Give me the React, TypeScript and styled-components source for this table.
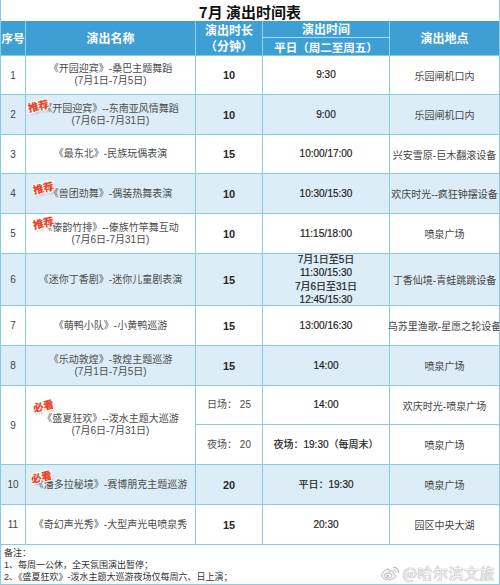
import React from "react";
import styled, { createGlobalStyle } from "styled-components";

const LINE = "#86cbe3";
const HEAD_BG = "#3d9fd3";
const ALT_BG = "#dcedf7";
const BODY_FONT = `"Liberation Sans", "Noto Sans CJK SC", sans-serif`;

const GlobalStyle = createGlobalStyle`
  html, body { margin: 0; padding: 0; background: #fff; }
  body { font-family: "Noto Sans CJK SC", "Noto Sans", sans-serif; }
  * { box-sizing: border-box; }
`;

const Page = styled.div`
  width: 500px;
  height: 585px;
  border-left: 1px solid ${LINE};
  border-right: 1px solid ${LINE};
  border-bottom: 1px solid ${LINE};
  display: flex;
  flex-direction: column;
  overflow: hidden;
  background: #fff;
`;

const Grid = styled.div`
  display: grid;
  grid-template-columns: 25px 170px 67px 127px 109px;
  grid-template-rows: 21px 17px 18px 39px 40px 39px 40px 40px 52px 40px 40px 39px 40px 40px 40px;
`;

const Title = styled.div`
  grid-column: 1 / -1;
  display: flex;
  align-items: center;
  justify-content: center;
  font-size: 15px;
  font-weight: 700;
  color: #111;
  line-height: 1;
  padding-top: 1px;
`;

const HeadCell = styled.div<{ $span?: number; $last?: boolean; $top?: boolean; $size?: number }>`
  grid-row: span ${(p) => p.$span ?? 1};
  background: ${HEAD_BG};
  color: #fff;
  font-weight: 700;
  font-size: ${(p) => p.$size ?? 12}px;
  line-height: 16px;
  display: flex;
  flex-direction: column;
  align-items: center;
  justify-content: center;
  white-space: nowrap;
  border-right: ${(p) => (p.$last ? "none" : "1px solid #8fd2ee")};
  border-bottom: 1px solid ${(p) => (p.$top ? "#a9def3" : LINE)};
`;

const Cell = styled.div<{ $alt?: boolean; $span?: number; $last?: boolean }>`
  grid-row: span ${(p) => p.$span ?? 1};
  position: relative;
  background: ${(p) => (p.$alt ? ALT_BG : "#fff")};
  border-right: ${(p) => (p.$last ? "none" : `1px solid ${LINE}`)};
  border-bottom: 1px solid ${LINE};
  display: flex;
  flex-direction: column;
  align-items: center;
  justify-content: center;
  text-align: center;
  white-space: nowrap;
  font-family: ${BODY_FONT};
`;

const NumText = styled.span`
  font-size: 10px;
  color: #444;
`;

const NameText = styled.span`
  font-size: 10px;
  line-height: 12px;
  color: #4d4d4d;
`;

const DurText = styled.span`
  font-size: 11px;
  font-weight: 700;
  color: #2a2a2a;
`;

const TimeText = styled.span`
  font-size: 10px;
  line-height: 13.3px;
  color: #1f1f1f;
  -webkit-text-stroke: 0.2px #1f1f1f;
`;

const PlaceText = styled.span`
  font-size: 10px;
  color: #444;
`;

const Badge = styled.span<{ $left: number; $top: number }>`
  position: absolute;
  left: ${(p) => p.$left}px;
  top: ${(p) => p.$top}px;
  font-family: "Noto Sans CJK SC", sans-serif;
  font-size: 10.5px;
  font-weight: 900;
  line-height: 1;
  color: #e8452a;
  transform: rotate(-13deg);
  text-shadow: 1px 1px 0 #fff, -1px -1px 0 #fff, 1px -1px 0 #fff, -1px 1px 0 #fff,
    1px 2px 2px rgba(0, 0, 0, 0.25);
  z-index: 2;
`;

const Footer = styled.div`
  flex: 1;
  display: flex;
  justify-content: space-between;
  align-items: flex-end;
  padding: 2px 4px 5px 3px;
`;

const Notes = styled.div`
  align-self: flex-start;
  display: flex;
  flex-direction: column;
  font-family: ${BODY_FONT};
  font-size: 9px;
  line-height: 12px;
  color: #333;
`;

const Watermark = styled.div`
  display: flex;
  align-items: center;
  gap: 3px;
  font-size: 15px;
  color: #f4f4f4;
  text-shadow: 0 0 1px #a0a0a0, 0 0 1px #a0a0a0;
  letter-spacing: 0.5px;
`;

type Row = {
  no: string;
  alt?: boolean;
  badge?: { text: string; left: number; top: number };
  name: string[];
  dur: string;
  time: string[];
  place: string;
};

const rows: Row[] = [
  { no: "1", name: ["《开园迎宾》-桑巴主题舞蹈", "(7月1日-7月5日)"], dur: "10", time: ["9:30"], place: "乐园闸机口内" },
  {
    no: "2",
    alt: true,
    badge: { text: "推荐", left: 2, top: 6 },
    name: ["《开园迎宾》--东南亚风情舞蹈", "(7月6日-7月31日)"],
    dur: "10",
    time: ["9:00"],
    place: "乐园闸机口内",
  },
  { no: "3", name: ["《最东北》-民族玩偶表演"], dur: "15", time: ["10:00/17:00"], place: "兴安雪原-巨木翻滚设备" },
  {
    no: "4",
    alt: true,
    badge: { text: "推荐", left: 7, top: 9 },
    name: ["《兽团劲舞》-偶装热舞表演"],
    dur: "10",
    time: ["10:30/15:30"],
    place: "欢庆时光--疯狂钟摆设备",
  },
  {
    no: "5",
    badge: { text: "推荐", left: 7, top: 4 },
    name: ["《傣韵竹排》--傣族竹竿舞互动", "(7月6日-7月31日)"],
    dur: "10",
    time: ["11:15/18:00"],
    place: "喷泉广场",
  },
  {
    no: "6",
    alt: true,
    name: ["《迷你丁香剧》-迷你儿童剧表演"],
    dur: "15",
    time: ["7月1日至5日", "11:30/15:30", "7月6日至31日", "12:45/15:30"],
    place: "丁香仙境-青蛙跳跳设备",
  },
  { no: "7", name: ["《萌鸭小队》-小黄鸭巡游"], dur: "15", time: ["13:00/16:30"], place: "乌苏里渔歌-星愿之轮设备" },
  { no: "8", alt: true, name: ["《乐动敦煌》-敦煌主题巡游", "(7月1日-7月5日)"], dur: "15", time: ["14:00"], place: "喷泉广场" },
];

const tailRows: Row[] = [
  {
    no: "10",
    alt: true,
    badge: { text: "必看", left: 5, top: 7 },
    name: ["《潘多拉秘境》-赛博朋克主题巡游"],
    dur: "20",
    time: ["平日：19:30"],
    place: "喷泉广场",
  },
  { no: "11", name: ["《奇幻声光秀》-大型声光电喷泉秀"], dur: "15", time: ["20:30"], place: "园区中央大湖" },
];

const RowCells: React.FC<{ r: Row }> = ({ r }) => (
  <>
    <Cell $alt={r.alt}>
      <NumText>{r.no}</NumText>
    </Cell>
    <Cell $alt={r.alt}>
      {r.badge && (
        <Badge $left={r.badge.left} $top={r.badge.top}>
          {r.badge.text}
        </Badge>
      )}
      {r.name.map((n) => (
        <NameText key={n}>{n}</NameText>
      ))}
    </Cell>
    <Cell $alt={r.alt}>
      <DurText>{r.dur}</DurText>
    </Cell>
    <Cell $alt={r.alt}>
      {r.time.map((t) => (
        <TimeText key={t}>{t}</TimeText>
      ))}
    </Cell>
    <Cell $alt={r.alt} $last>
      <PlaceText>{r.place}</PlaceText>
    </Cell>
  </>
);

const WeiboLogo = () => (
  <svg width="19" height="16" viewBox="0 0 24 20">
    <path
      d="M9.5 18.5C4.6 18.5 1 16 1 12.9c0-1.7 1-3.5 2.8-5.3C6.2 5.2 8.9 4.1 10 5.3c.5.5.5 1.4.2 2.5-.2.5.4.2.4.2 2.3-.9 4.2-1 4.9 0 .4.5.4 1.3 0 2.3-.2.4 0 .5.3.6 1.4.4 2.8 1.5 2.8 3.2 0 2.6-3.9 4.4-9.1 4.4z"
      fill="#f4f4f4"
      stroke="#a8a8a8"
      strokeWidth="1"
    />
    <ellipse cx="9" cy="13.3" rx="4.6" ry="3.1" fill="#fafafa" stroke="#a8a8a8" strokeWidth="0.9" />
    <circle cx="8.4" cy="13.6" r="1.4" fill="#ababab" />
    <path d="M16 3a5.5 5.5 0 0 1 6 6.5" fill="none" stroke="#b3b3b3" strokeWidth="1.4" strokeLinecap="round" />
    <path d="M16.3 6a2.6 2.6 0 0 1 2.8 3" fill="none" stroke="#b3b3b3" strokeWidth="1.2" strokeLinecap="round" />
  </svg>
);

export default function App() {
  return (
    <>
      <GlobalStyle />
      <Page>
        <Grid>
          <Title>7月 演出时间表</Title>

          <HeadCell $span={2} $size={11.5}>序号</HeadCell>
          <HeadCell $span={2}>演出名称</HeadCell>
          <HeadCell $span={2}>
            <span>演出时长</span>
            <span>（分钟）</span>
          </HeadCell>
          <HeadCell $top>演出时间</HeadCell>
          <HeadCell $span={2} $last>
            演出地点
          </HeadCell>
          <HeadCell $size={11.5}>平日（周二至周五）</HeadCell>

          {rows.map((r) => (
            <RowCells key={r.no} r={r} />
          ))}

          <Cell $span={2}>
            <NumText>9</NumText>
          </Cell>
          <Cell $span={2}>
            <Badge $left={7} $top={15}>
              必看
            </Badge>
            <NameText>《盛夏狂欢》--泼水主题大巡游</NameText>
            <NameText>(7月6日-7月31日)</NameText>
          </Cell>
          <Cell>
            <NameText>日场：&nbsp;25</NameText>
          </Cell>
          <Cell>
            <TimeText>14:00</TimeText>
          </Cell>
          <Cell $last>
            <PlaceText>欢庆时光-喷泉广场</PlaceText>
          </Cell>
          <Cell>
            <NameText>夜场：&nbsp;20</NameText>
          </Cell>
          <Cell>
            <TimeText>夜场：19:30（每周末）</TimeText>
          </Cell>
          <Cell $last>
            <PlaceText>喷泉广场</PlaceText>
          </Cell>

          {tailRows.map((r) => (
            <RowCells key={r.no} r={r} />
          ))}
        </Grid>
        <Footer>
          <Notes>
            <span>备注：</span>
            <span>1、每周一公休，全天氛围演出暂停；</span>
            <span>2、《盛夏狂欢》-泼水主题大巡游夜场仅每周六、日上演；</span>
          </Notes>
          <Watermark>
            <WeiboLogo />
            <span>@哈尔滨文旅</span>
          </Watermark>
        </Footer>
      </Page>
    </>
  );
}
